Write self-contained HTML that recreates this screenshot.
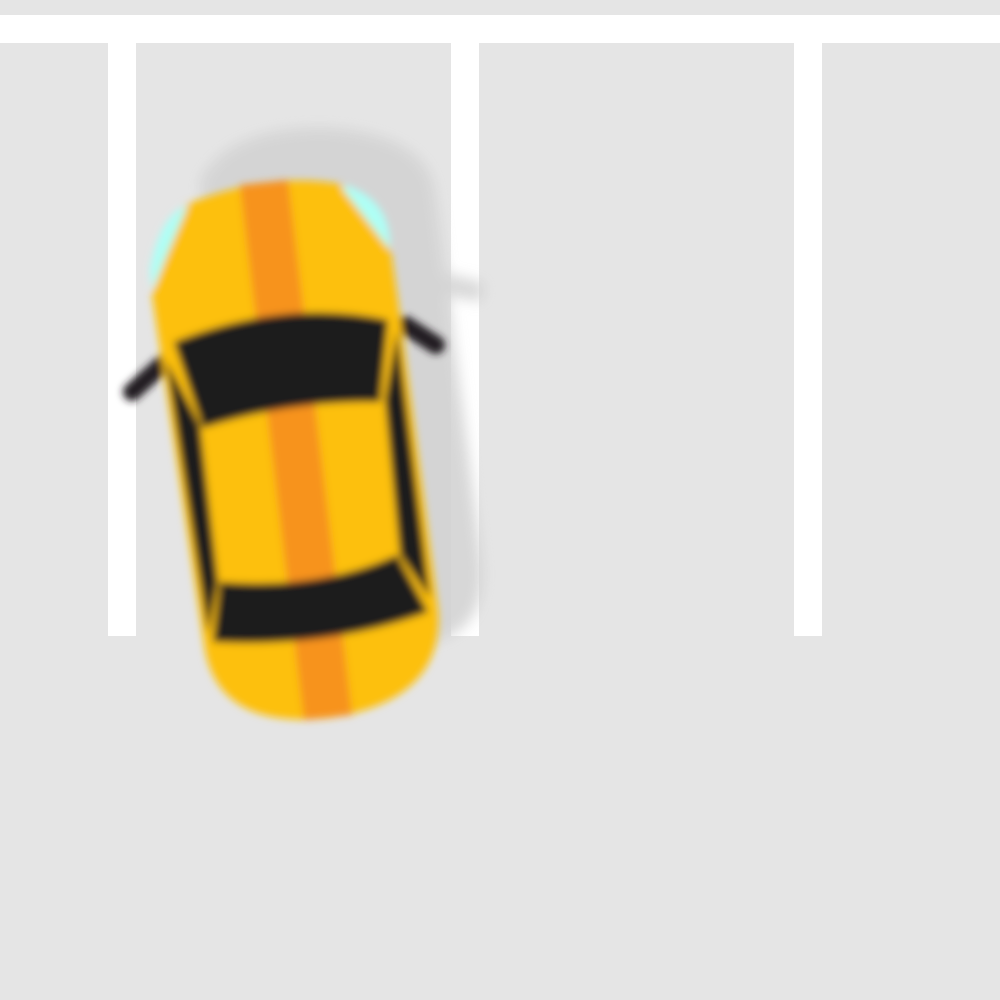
<!DOCTYPE html><html><head><style>body{margin:0;background:#e5e5e5}svg{display:block}</style></head><body>
<svg width="1000" height="1000" viewBox="0 0 1000 1000">
<defs><filter id="b" x="-20%" y="-20%" width="140%" height="140%"><feGaussianBlur stdDeviation="4"/></filter>
<filter id="s" x="-20%" y="-20%" width="140%" height="140%"><feGaussianBlur stdDeviation="7"/></filter></defs>
<rect width="1000" height="1000" fill="#e5e5e5"/>
<rect y="15" width="1000" height="28" fill="#fff"/>
<rect x="108" y="43" width="28" height="593" fill="#fff"/>
<rect x="451" y="43" width="28" height="593" fill="#fff"/>
<rect x="794" y="43" width="28" height="593" fill="#fff"/>
<g filter="url(#s)" fill="#d3d3d3" opacity="0.9">
<path d="M200,180 Q230,125 330,128 Q425,135 435,190 L482,560 Q490,635 420,645 L250,650 Z"/>
<path d="M440,272 L485,283 L482,302 L440,294 Z"/>
</g>
<g filter="url(#b)">
<path d="M132,392 L165,362" stroke="#231f20" stroke-width="18" stroke-linecap="round"/>
<path d="M405,325 L436,345" stroke="#231f20" stroke-width="18" stroke-linecap="round"/>
<path d="M152,295 L185,205 Q270,170 345,185 L390,245 L398,300 L438,610 Q445,700 330,718 Q220,730 205,650 Z" fill="#fdc00a"/>
<path d="M152,290 L188,205 Q160,215 150,270 Z" fill="#aefff6"/>
<path d="M342,188 L390,250 Q392,200 345,185 Z" fill="#aefff6"/>
<path d="M240,185 L288,180 L352,715 L304,720 Z" fill="#f7931e"/>
<path d="M174,342 Q285,298 388,320 L380,402 Q290,400 203,428 Z" fill="#1c1c1c"/>
<path d="M220,582 Q320,590 397,555 L428,612 Q330,648 213,642 Z" fill="#1c1c1c"/>
<path d="M166,360 L200,425 L218,582 L208,634 Z" fill="#1c1c1c"/>
<path d="M397,330 L385,400 L400,555 L430,598 Z" fill="#1c1c1c"/>
</g>
</svg>
</body></html>
